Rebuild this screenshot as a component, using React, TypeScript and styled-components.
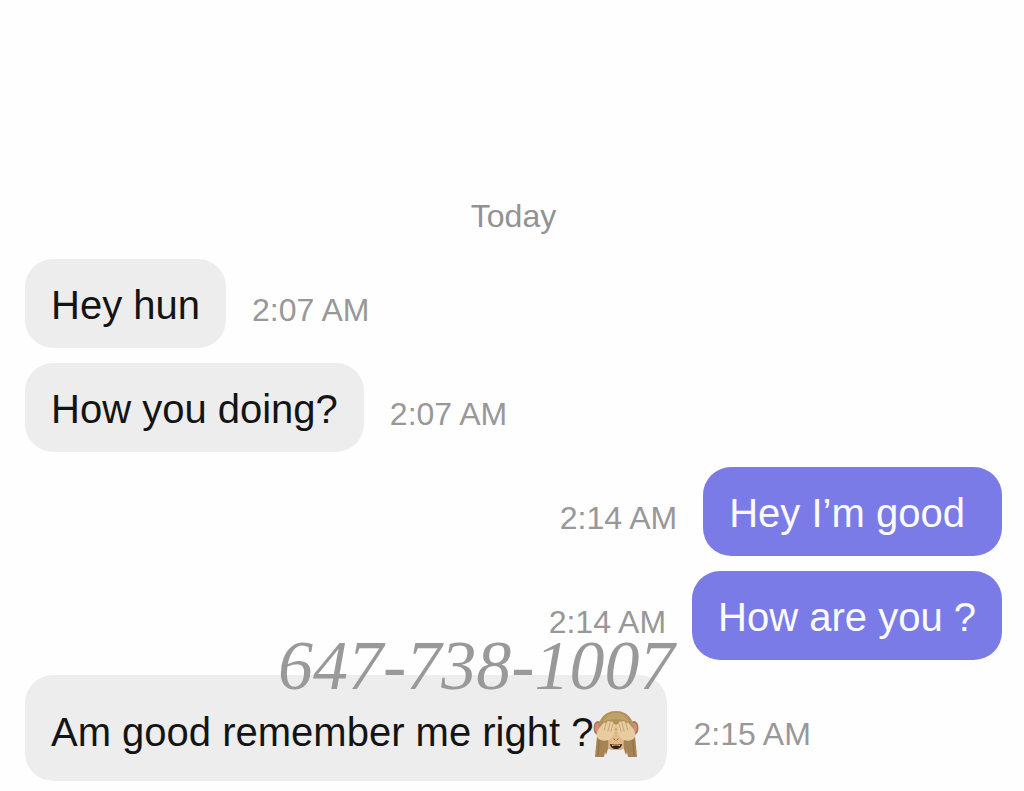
import React from 'react';
import styled, { createGlobalStyle } from 'styled-components';

const GlobalStyle = createGlobalStyle`
  *, *::before, *::after { box-sizing: border-box; }
  body {
    margin: 0;
    background: #fefefe;
    font-family: "Liberation Sans", Arial, sans-serif;
  }
`;

const Chat = styled.main`
  min-height: 100vh;
  padding: 192px 22px 8px 25px;
`;

const DayLabel = styled.h1`
  margin: 0 0 19px;
  color: #929292;
  font-size: 32px;
  font-weight: 400;
  line-height: 48px;
  text-align: center;
`;

const Thread = styled.ol`
  display: flex;
  flex-direction: column;
  gap: 15px;
  margin: 0;
  padding: 0;
  list-style: none;
`;

const Row = styled.li<{ $sent?: boolean }>`
  position: relative;
  display: flex;
  flex-direction: ${({ $sent }) => ($sent ? 'row-reverse' : 'row')};
  align-items: center;
  gap: 26px;
`;

const Bubble = styled.p<{ $sent?: boolean; $tall?: boolean }>`
  display: flex;
  align-items: center;
  margin: 0;
  padding: ${({ $tall }) => ($tall ? '32px 28px 24px 26px' : '24px 26px 20px')};
  border-radius: 28px;
  background: ${({ $sent }) => ($sent ? '#7b7be8' : '#ededed')};
  color: ${({ $sent }) => ($sent ? '#fbfbff' : '#141414')};
  font-size: 40px;
  line-height: 45px;
  white-space: pre-wrap;
`;

const Time = styled.time`
  padding-top: 12px;
  color: #989898;
  font-size: 32px;
  line-height: 40px;
  white-space: nowrap;
`;

const PhoneMark = styled.span`
  position: absolute;
  top: -45px;
  left: 253px;
  color: #999999;
  font-family: "Liberation Serif", "Times New Roman", serif;
  font-size: 70px;
  font-style: italic;
  line-height: 72px;
  white-space: nowrap;
`;

const Emoji = styled.svg`
  flex: none;
  width: 46px;
  height: 46px;
  margin-top: 4px;
`;

function ShyMonkey() {
  return (
    <Emoji viewBox="0 0 46 46" role="img" aria-label="See-no-evil monkey">
      <ellipse cx="5" cy="17" rx="4.5" ry="7" fill="#a97850" />
      <ellipse cx="41" cy="17" rx="4.5" ry="7" fill="#a97850" />
      <ellipse cx="5" cy="17" rx="3" ry="5" fill="#d98a84" />
      <ellipse cx="41" cy="17" rx="3" ry="5" fill="#d98a84" />
      <path d="M23 0C12 0 5 8 5 19c0 6 3 11 6 15 3 4 7 5 12 5s9-1 12-5c3-4 6-9 6-15C41 8 34 0 23 0Z" fill="#b39259" />
      <path d="M10 11C13 4 18 2 23 2s10 2 13 9c-8-4-18-4-26 0Z" fill="#bea16b" />
      <path d="M13 31c1-6 5-12 10-12s9 6 10 12c1 5-4 8-10 8s-11-3-10-8Z" fill="#e0b987" />
      <path d="M21 28l1 1M25 28l-1 1" stroke="#8b5c3b" strokeWidth="1" strokeLinecap="round" />
      <path d="M17 33c4 1 8 1 12 0 0 3-3 5-6 5s-6-2-6-5Z" fill="#352019" />
      <path d="M19 34c3 1 5 1 8 0v1h-8Z" fill="#f4e9dc" />
      <path d="M4 25L2 46h9l1-5 1 3c2-5 3-9 2-16Z" fill="#a58355" />
      <path d="M42 25l2 21h-9l-1-5-1 3c-2-5-3-9-2-16Z" fill="#a58355" />
      <path d="M6 29L5 44M40 29l1 15" stroke="#937046" strokeWidth="1" fill="none" />
      <path d="M4 26c-1-5 1-8 5-12 2-3 3-3 4-1 1-3 3-4 4-2 2-1 4 0 3 2 2-1 3 1 3 3l-3 9c-2 5-12 7-16 1Z" fill="#e7cca0" />
      <path d="M42 26c1-5-1-8-5-12-2-3-3-3-4-1-1-3-3-4-4-2-2-1-4 0-3 2-2-1-3 1-3 3l3 9c2 5 12 7 16 1Z" fill="#e7cca0" />
      <path d="M13 13l-2 6M17 12l-2 8M20 13l-2 7M33 13l2 6M29 12l2 8M26 13l2 7" stroke="#c7a476" strokeWidth="1" fill="none" strokeLinecap="round" />
    </Emoji>
  );
}

type Message = { text: string; time: string; sent?: boolean; shy?: boolean; phone?: string };

const messages: Message[] = [
  { text: 'Hey hun', time: '2:07 AM' },
  { text: 'How you doing?', time: '2:07 AM' },
  { text: 'Hey I’m good ', time: '2:14 AM', sent: true },
  { text: 'How are you ?', time: '2:14 AM', sent: true },
  { text: 'Am good remember me right ?', time: '2:15 AM', shy: true, phone: '647-738-1007' },
];

export default function App() {
  return (
    <>
      <GlobalStyle />
      <Chat>
        <DayLabel>Today</DayLabel>
        <Thread>
          {messages.map((m) => (
            <Row key={m.text} $sent={m.sent}>
              <Bubble $sent={m.sent} $tall={m.shy}>
                {m.text}
                {m.shy && <ShyMonkey />}
              </Bubble>
              <Time>{m.time}</Time>
              {m.phone && <PhoneMark>{m.phone}</PhoneMark>}
            </Row>
          ))}
        </Thread>
      </Chat>
    </>
  );
}
